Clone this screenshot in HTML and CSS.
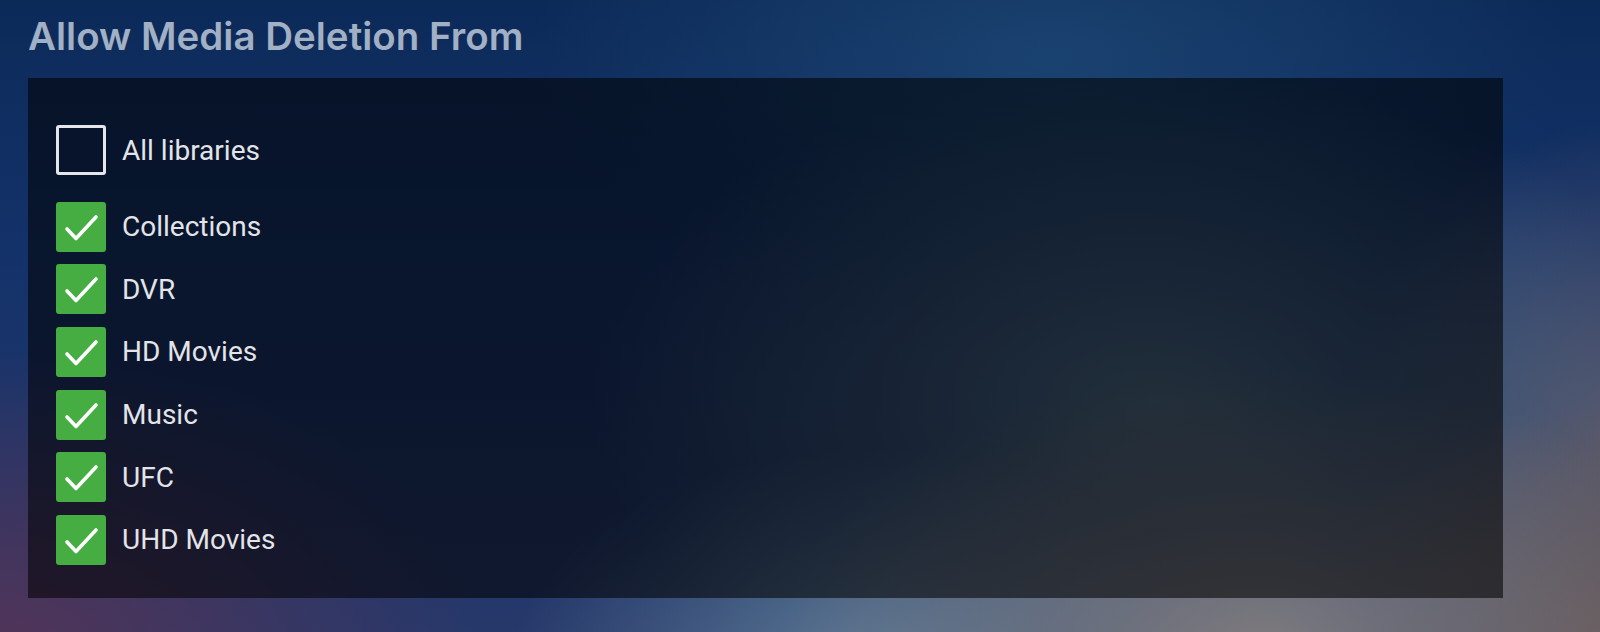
FILE: index.html
```html
<!DOCTYPE html>
<html lang="en">
<head>
<meta charset="utf-8">
<title>Allow Media Deletion From</title>
<link rel="stylesheet" href="styles.css">
</head>
<body>
<div class="page">
  <h1 class="title">Allow Media Deletion From</h1>
  <div class="panel">
    <div class="row row-all">
      <span class="box box-empty"></span>
      <span class="label">All libraries</span>
    </div>
    <div class="list">
      <div class="row">
        <span class="box box-checked"><svg viewBox="0 0 50 50" width="50" height="50"><path d="M11 27 L20 36.5 L40 15" /></svg></span>
        <span class="label">Collections</span>
      </div>
      <div class="row">
        <span class="box box-checked"><svg viewBox="0 0 50 50" width="50" height="50"><path d="M11 27 L20 36.5 L40 15" /></svg></span>
        <span class="label">DVR</span>
      </div>
      <div class="row">
        <span class="box box-checked"><svg viewBox="0 0 50 50" width="50" height="50"><path d="M11 27 L20 36.5 L40 15" /></svg></span>
        <span class="label">HD Movies</span>
      </div>
      <div class="row">
        <span class="box box-checked"><svg viewBox="0 0 50 50" width="50" height="50"><path d="M11 27 L20 36.5 L40 15" /></svg></span>
        <span class="label">Music</span>
      </div>
      <div class="row">
        <span class="box box-checked"><svg viewBox="0 0 50 50" width="50" height="50"><path d="M11 27 L20 36.5 L40 15" /></svg></span>
        <span class="label">UFC</span>
      </div>
      <div class="row">
        <span class="box box-checked"><svg viewBox="0 0 50 50" width="50" height="50"><path d="M11 27 L20 36.5 L40 15" /></svg></span>
        <span class="label">UHD Movies</span>
      </div>
    </div>
  </div>
</div>
</body>
</html>
```
FILE: styles.css
```css
html, body {
  margin: 0;
  padding: 0;
  width: 1600px;
  height: 632px;
  overflow: hidden;
}
body {
  font-family: Roboto, "Noto Sans", sans-serif;
  background-color: #1a3464;
  background-image:
    radial-gradient(ellipse 480px 280px at 1260px 650px, rgba(128,124,126,1), rgba(128,124,126,0) 100%),
    radial-gradient(ellipse 360px 220px at 870px 670px, rgba(95,125,152,0.95), rgba(95,125,152,0) 100%),
    radial-gradient(ellipse 300px 240px at 1620px 640px, rgba(100,86,86,1), rgba(100,86,86,0) 100%),
    radial-gradient(ellipse 560px 330px at 1150px 400px, rgba(78,108,134,0.95), rgba(78,108,134,0) 100%),
    radial-gradient(ellipse 280px 340px at 1620px 460px, rgba(96,90,104,0.95), rgba(96,90,104,0) 100%),
    radial-gradient(ellipse 480px 300px at 0px 650px, rgba(82,52,88,1), rgba(82,52,88,0) 100%),
    radial-gradient(ellipse 520px 260px at 1050px 60px, rgba(26,66,112,1), rgba(26,66,112,0) 100%),
    linear-gradient(180deg, #0c2a58 0%, #14326a 40%, #26386a 100%);
}
.page {
  padding: 9px 0 0 28px;
}
.title {
  margin: 0 0 14px 0;
  font-family: Inter, Roboto, sans-serif;
  font-size: 38.5px;
  line-height: 55px;
  font-weight: 600;
  color: #a1b0c5;
  letter-spacing: 0;
}
.panel {
  width: 1475px;
  height: 520px;
  box-sizing: border-box;
  padding: 47px 0 0 28px;
  background: rgba(0, 0, 0, 0.56);
}
.row {
  display: flex;
  align-items: center;
  gap: 16px;
  height: 50px;
}
.row-all {
  margin-bottom: 26.5px;
}
.list {
  display: flex;
  flex-direction: column;
  gap: 12.7px;
}
.box {
  width: 50px;
  height: 50px;
  box-sizing: border-box;
  border-radius: 3px;
  flex: 0 0 50px;
  display: block;
}
.box-empty {
  border: 3px solid #e4e6ea;
}
.box-checked {
  background: #45ad42;
}
.box-checked svg {
  display: block;
}
.box-checked path {
  fill: none;
  stroke: #ffffff;
  stroke-width: 3.6;
  stroke-linecap: round;
  stroke-linejoin: round;
}
.label {
  font-size: 28px;
  color: #e3e4e8;
  font-weight: 400;
}
```
